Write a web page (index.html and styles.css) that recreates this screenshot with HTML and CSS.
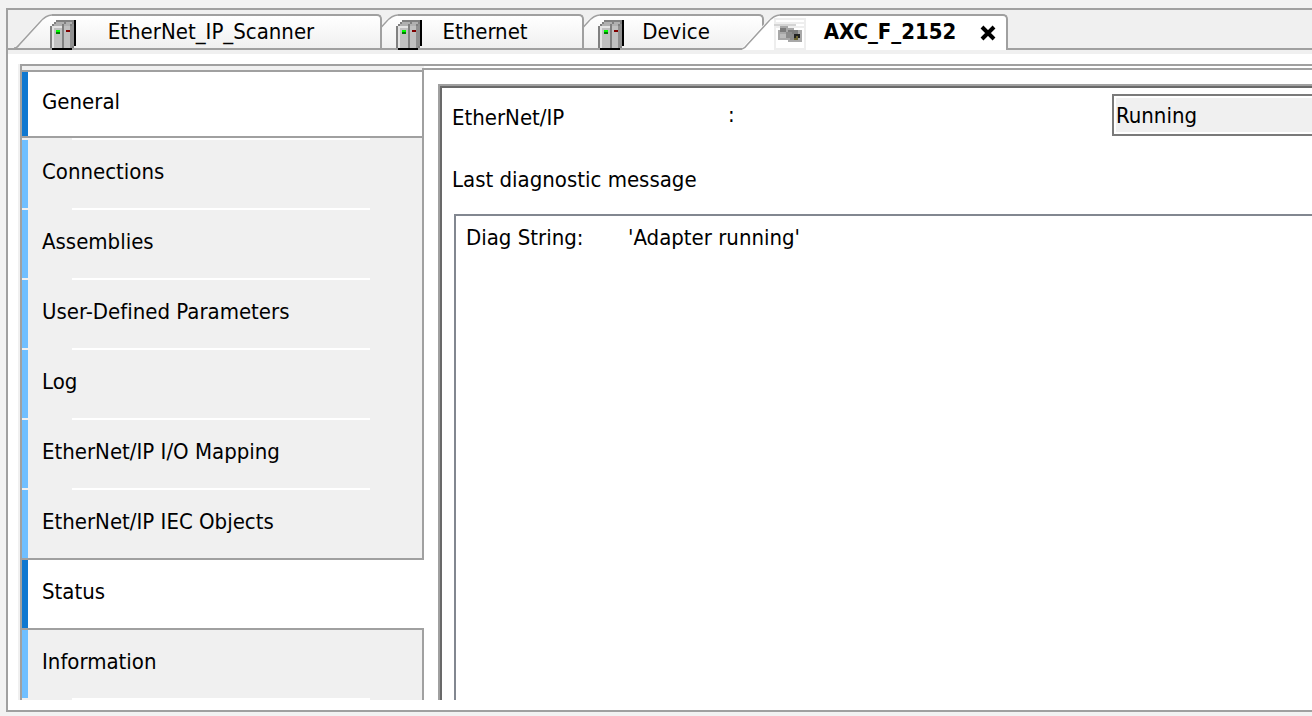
FILE: index.html
```
<!DOCTYPE html>
<html lang="en">
<head>
  <meta charset="UTF-8">
  <meta name="viewport" content="width=device-width, initial-scale=1.0">
  <title>AXC_F_2152</title>
  <link rel="stylesheet" href="styles.css">
</head>
<body>
  <!-- shared shapes for the tabs -->
  <svg class="defs" width="0" height="0" aria-hidden="true">
    <defs>
      <linearGradient id="fade" x1="0" y1="0" x2="0" y2="1">
        <stop offset="0" stop-color="#fff"/>
        <stop offset="1" stop-color="#f0f0f0"/>
      </linearGradient>
      <symbol id="device" viewBox="0 0 26 30">
        <g shape-rendering="crispEdges">
          <path d="M8 0H26V26H24V28H22V30H2V28H20V2H8Z" fill="#000"/>
          <path d="M0 6H2V4H4V2H6V0H24V28H0Z" fill="#808080"/>
          <path d="M4 4H6V2H14V4H12V6H4ZM14 4H16V2H22V4H20V6H14Z" fill="#b0b0b0"/>
          <path d="M20 6H22V4H24V26H22V28H20Z" fill="#909090"/>
          <path d="M2 6H12V28H2ZM14 6H20V28H14Z" fill="#c0c0c0"/>
          <path d="M2 6H4V28H2ZM2 6H12V8H2Z" fill="#e4e4e4"/>
          <path d="M6 10H10V12H6Z" fill="#00ff00"/>
          <path d="M6 12H10V14H6Z" fill="#008000"/>
          <path d="M16 10H20V12H16Z" fill="#800000"/>
        </g>
      </symbol>
    </defs>
  </svg>

  <div class="window">
    <div class="tabs">
      <div class="tab tab-scanner">
        <svg class="edge" viewBox="0 0 38 36"><path class="fill" d="M0 34L26 6Q32 1 38 1V34Z"/><path class="line" d="M0 34Q3 34 5 31L26 8Q32 1 38 1"/></svg>
        <button class="tab-body"><svg class="icon"><use href="#device"/></svg><span>EtherNet_IP_Scanner</span></button>
      </div>
      <div class="tab tab-ethernet">
        <svg class="edge" viewBox="0 0 38 36"><path class="fill" d="M0 34L26 6Q32 1 38 1V34Z"/><path class="line" d="M0 34Q3 34 5 31L26 8Q32 1 38 1"/></svg>
        <button class="tab-body"><svg class="icon"><use href="#device"/></svg><span>Ethernet</span></button>
      </div>
      <div class="tab tab-device">
        <svg class="edge" viewBox="0 0 38 36"><path class="fill" d="M0 34L26 6Q32 1 38 1V34Z"/><path class="line" d="M0 34Q3 34 5 31L26 8Q32 1 38 1"/></svg>
        <button class="tab-body"><svg class="icon"><use href="#device"/></svg><span>Device</span></button>
      </div>
      <div class="tab active">
        <svg class="edge" viewBox="0 0 38 36"><path class="fill" d="M0 36V34L26 6Q32 1 38 1V36Z"/><path class="line" d="M0 35Q3 34 5 31L26 8Q32 1 38 1"/></svg>
        <button class="tab-body">
          <svg class="photo" viewBox="0 0 32 32">
            <path d="M0 0H32V32H0Z" fill="#eee"/>
            <path d="M2 2H30V4H2ZM2 10H30V30H2ZM22 6H30V8H22Z" fill="#fff"/>
            <path d="M0 6H22V8H0Z" fill="#d4d4d4"/>
            <path d="M6 8H14V10H20V12H28V24H14V22H4V12H6Z" fill="#a8a8a8"/>
            <path d="M6 10H12V14H6ZM14 12H24V16H14Z" fill="#7c7c7c"/>
            <path d="M6 16H14V20H6Z" fill="#bcbcbc"/>
            <path d="M12 14H18V20H12ZM16 16H20V22H16Z" fill="#8c8c8c"/>
            <path d="M20 16H26V20H20Z" fill="#222"/>
            <path d="M22 18H24V22H20V20H22Z" fill="#6a6330"/>
          </svg>
          <span>AXC_F_2152</span>
        </button>
        <button class="close" aria-label="Close">
          <svg viewBox="0 0 16 16"><path d="M2 2L14 14M14 2L2 14"/></svg>
        </button>
      </div>
    </div>

    <div class="workspace">
      <div class="editor">
        <nav class="pages">
          <a href="#general" class="hot">General</a>
          <a href="#connections" class="first">Connections</a>
          <a href="#assemblies">Assemblies</a>
          <a href="#parameters">User-Defined Parameters</a>
          <a href="#log">Log</a>
          <a href="#io-mapping">EtherNet/IP I/O Mapping</a>
          <a href="#iec-objects" class="last">EtherNet/IP IEC Objects</a>
          <a href="#status" class="selected">Status</a>
          <a href="#information">Information</a>
        </nav>
        <main class="page">
          <div class="status">
            <div class="field">
              <label for="state">EtherNet/IP</label>
              <span>:</span>
              <input type="text" id="state" value="Running" readonly>
            </div>
            <h2>Last diagnostic message</h2>
            <dl class="messages">
              <dt>Diag String:</dt>
              <dd>'Adapter running'</dd>
            </dl>
          </div>
        </main>
      </div>
    </div>
  </div>
</body>
</html>
```
FILE: styles.css
```
* {
  box-sizing: border-box;
}
body {
  margin: 0;
  min-height: 100vh;
  padding: 8px 0 4px 6px;
  display: flex;
  background: #f2f2f2;
  color: #000;
  font: 22px/28px "DejaVu Sans Condensed", Tahoma, sans-serif;
  font-variant-ligatures: none;
}
button, input {
  font: inherit;
  color: inherit;
}
button {
  border: 0;
  padding: 0;
  background: none;
}
.defs {
  position: absolute;
}
.window {
  flex: 1;
  min-width: 0;
  display: flex;
  flex-direction: column;
  border: 2px solid #a0a0a0;
  border-right: 0;
  background: #f0f0f0;
}

/* tabs */
.tabs {
  display: flex;
  height: 40px;
  padding: 4px 0 0 6px;
  border-bottom: 2px solid #a0a0a0;
}
.tab {
  position: relative;
  display: flex;
  flex: none;
  height: 34px;
}
.tab + .tab {
  margin-left: -22px;
}
.tab-scanner {
  width: 368px;
  z-index: 3;
}
.tab-ethernet {
  width: 224px;
  z-index: 2;
}
.tab-device {
  width: 202px;
  z-index: 1;
}
.tab.active {
  width: 266px;
  height: 36px;
  z-index: 4;
  font-weight: bold;
}
.edge {
  flex: none;
  width: 38px;
  height: 36px;
}
.edge .fill {
  fill: url(#fade);
}
.edge .line {
  fill: none;
  stroke: #a0a0a0;
  stroke-width: 1.5;
}
.active .fill {
  fill: #fff;
}
.tab-body {
  flex: 1;
  display: flex;
  align-items: flex-start;
  border-top: 2px solid #a0a0a0;
  border-right: 2px solid #a0a0a0;
  border-top-right-radius: 5px;
  background: linear-gradient(#fff, #f0f0f0);
}
.tab-body span {
  flex: 1;
  padding: 2px 34px 0 0;
  text-align: center;
  white-space: nowrap;
}
.icon {
  flex: none;
  width: 26px;
  height: 30px;
  margin: 4px 0 0 -2px;
}
.photo {
  flex: none;
  width: 32px;
  height: 32px;
  margin: 2px 0 0 -6px;
}
.active .tab-body {
  border-right: 0;
  border-radius: 0;
  background: #fff;
}
.active .tab-body span {
  padding-right: 2px;
}
.close {
  width: 32px;
  border-top: 2px solid #a0a0a0;
  border-right: 2px solid #a0a0a0;
  border-top-right-radius: 5px;
  background: #fff;
}
.close svg {
  display: block;
  width: 16px;
  height: 16px;
  margin: 0 0 0 4px;
}
.close path {
  fill: none;
  stroke: #000;
  stroke-width: 4;
}

/* editor */
.workspace {
  flex: 1;
  display: flex;
  padding: 10px 0 10px 12px;
  border-top: 4px solid #f0f0f0;
  background: #fff;
}
.editor {
  flex: 1;
  min-width: 0;
  display: flex;
  border-top: 2px solid #a0a0a0;
  border-left: 2px solid #a0a0a0;
  box-shadow: -2px 0 #f0f0f0;
}
.pages {
  flex: none;
  width: 402px;
  padding-top: 4px;
  background: #f0f0f0;
}
/* blue marker on the left, white rule along the bottom */
.pages a {
  --marker: #70bfff;
  display: block;
  height: 70px;
  padding: 18px 0 0 20px;
  border-right: 2px solid #a0a0a0;
  color: inherit;
  text-decoration: none;
  background:
    linear-gradient(#fff, #fff) 50px 100% / 298px 2px no-repeat,
    linear-gradient(#f0f0f0, #f0f0f0) 0 100% / 6px 2px no-repeat,
    linear-gradient(var(--marker), var(--marker)) 0 0 / 6px 100% no-repeat;
}
.pages a.hot,
.pages a.selected,
.pages a.last {
  background: linear-gradient(var(--marker), var(--marker)) 0 0 / 6px 100% no-repeat #fff;
  border-bottom: 2px solid #a0a0a0;
}
.pages a.hot,
.pages a.selected {
  --marker: #1078d0;
}
.pages a.hot {
  height: 68px;
  padding-top: 16px;
  border-top: 2px solid #a0a0a0;
}
.pages a.first {
  height: 72px;
  padding-top: 20px;
  background:
    linear-gradient(#fff, #fff) 50px 0 / 298px 2px no-repeat,
    linear-gradient(#fff, #fff) 50px 100% / 298px 2px no-repeat,
    linear-gradient(var(--marker), var(--marker)) 0 2px / 6px 68px no-repeat;
}
.pages a.last {
  background-color: #f0f0f0;
}
.pages a.selected {
  border-right: 0;
}
.page {
  flex: 1;
  min-width: 0;
  display: flex;
  margin: 2px 0 0 -2px;
  padding: 16px 0 0 18px;
  border-top: 2px solid #a0a0a0;
}
.status {
  flex: 1;
  min-width: 0;
  display: flex;
  flex-direction: column;
  padding: 6px 0 0 10px;
  border: 2px solid #696969;
  border-width: 2px 0 0 2px;
  box-shadow: -2px -2px #a0a0a0, 0 -2px #a0a0a0, -2px 0 #a0a0a0;
  background: #fff;
}
.field {
  display: grid;
  grid-template-columns: 276px 384px minmax(0, 1fr);
  align-items: center;
}
.field label {
  padding-top: 6px;
}
.field input {
  width: 100%;
  height: 42px;
  padding: 0 2px;
  border: 2px solid #7a7a7a;
  border-right: 0;
  border-radius: 0;
  background: #f0f0f0;
  box-shadow: inset 2px 2px #fff, inset 0 -2px #fff;
}
h2 {
  margin: 30px 0 20px;
  font: inherit;
}
.messages {
  flex: 1;
  display: grid;
  grid-template-columns: 162px 1fr;
  align-content: start;
  margin: 0 0 0 2px;
  padding: 8px 10px;
  border: 2px solid #828790;
  border-width: 2px 0 0 2px;
}
.messages dd {
  margin: 0;
}
```
